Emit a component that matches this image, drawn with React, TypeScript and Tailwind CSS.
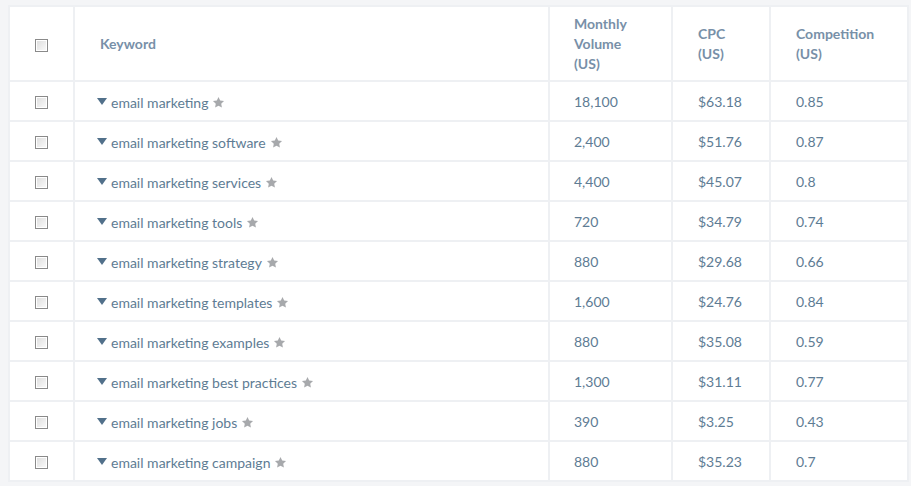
import React from "react";

const rows = [
  ["email marketing", "18,100", "$63.18", "0.85"],
  ["email marketing software", "2,400", "$51.76", "0.87"],
  ["email marketing services", "4,400", "$45.07", "0.8"],
  ["email marketing tools", "720", "$34.79", "0.74"],
  ["email marketing strategy", "880", "$29.68", "0.66"],
  ["email marketing templates", "1,600", "$24.76", "0.84"],
  ["email marketing examples", "880", "$35.08", "0.59"],
  ["email marketing best practices", "1,300", "$31.11", "0.77"],
  ["email marketing jobs", "390", "$3.25", "0.43"],
  ["email marketing campaign", "880", "$35.23", "0.7"],
];

function Box() {
  return (
    <span className="inline-block w-[13px] h-[13px] border border-[#8a8a8a] bg-gradient-to-br from-[#dcdcdc] to-[#fbfbfb] shadow-[inset_0_0_0_1px_#fff] align-middle" />
  );
}

function Star() {
  return (
    <svg width="13" height="13" viewBox="0 0 24 24" className="inline-block ml-[4px] mt-[2px] align-middle">
      <path d="M12 1.8l3.1 6.6 7.1.9-5.2 5 1.3 7.1L12 18l-6.3 3.4L7 14.3l-5.2-5 7.1-.9z" fill="#a7a9ac" />
    </svg>
  );
}

export default function App() {
  const cell = "border-2 border-[#eef0f3] bg-white";
  return (
    <div className="w-[911px] h-[486px] bg-[#f4f5f7] pl-[8px] pt-[5px] overflow-hidden" style={{ fontFamily: "Lato, 'Open Sans', sans-serif" }}>
      <table className="border-collapse text-[14px] text-[#5e7c94]">
        <thead>
          <tr className="h-[75px]">
            <th className={`${cell} w-[65px] text-center font-normal`}><Box /></th>
            <th className={`${cell} w-[475px] text-left pl-[25px] font-bold text-[#7890a8]`}>Keyword</th>
            <th className={`${cell} w-[123px] text-left pl-[24px] font-bold text-[#7890a8] leading-[20px]`}>Monthly<br />Volume<br />(US)</th>
            <th className={`${cell} w-[98px] text-left pl-[25px] font-bold text-[#7890a8] leading-[20px]`}>CPC<br />(US)</th>
            <th className={`${cell} w-[138px] text-left pl-[25px] font-bold text-[#7890a8] leading-[20px]`}>Competition<br />(US)</th>
          </tr>
        </thead>
        <tbody>
          {rows.map((r, i) => (
            <tr key={i} className="h-[40px]">
              <td className={`${cell} text-center`}><Box /></td>
              <td className={`${cell} pl-[22px] whitespace-nowrap`}>
                <span className="inline-block w-0 h-0 border-l-[5px] border-r-[5px] border-t-[7px] border-l-transparent border-r-transparent border-t-[#51708a] mr-[4px] align-middle" />
                <span className="align-middle">{r[0]}</span>
                <Star />
              </td>
              <td className={`${cell} pl-[24px]`}>{r[1]}</td>
              <td className={`${cell} pl-[25px]`}>{r[2]}</td>
              <td className={`${cell} pl-[25px]`}>{r[3]}</td>
            </tr>
          ))}
        </tbody>
      </table>
    </div>
  );
}
